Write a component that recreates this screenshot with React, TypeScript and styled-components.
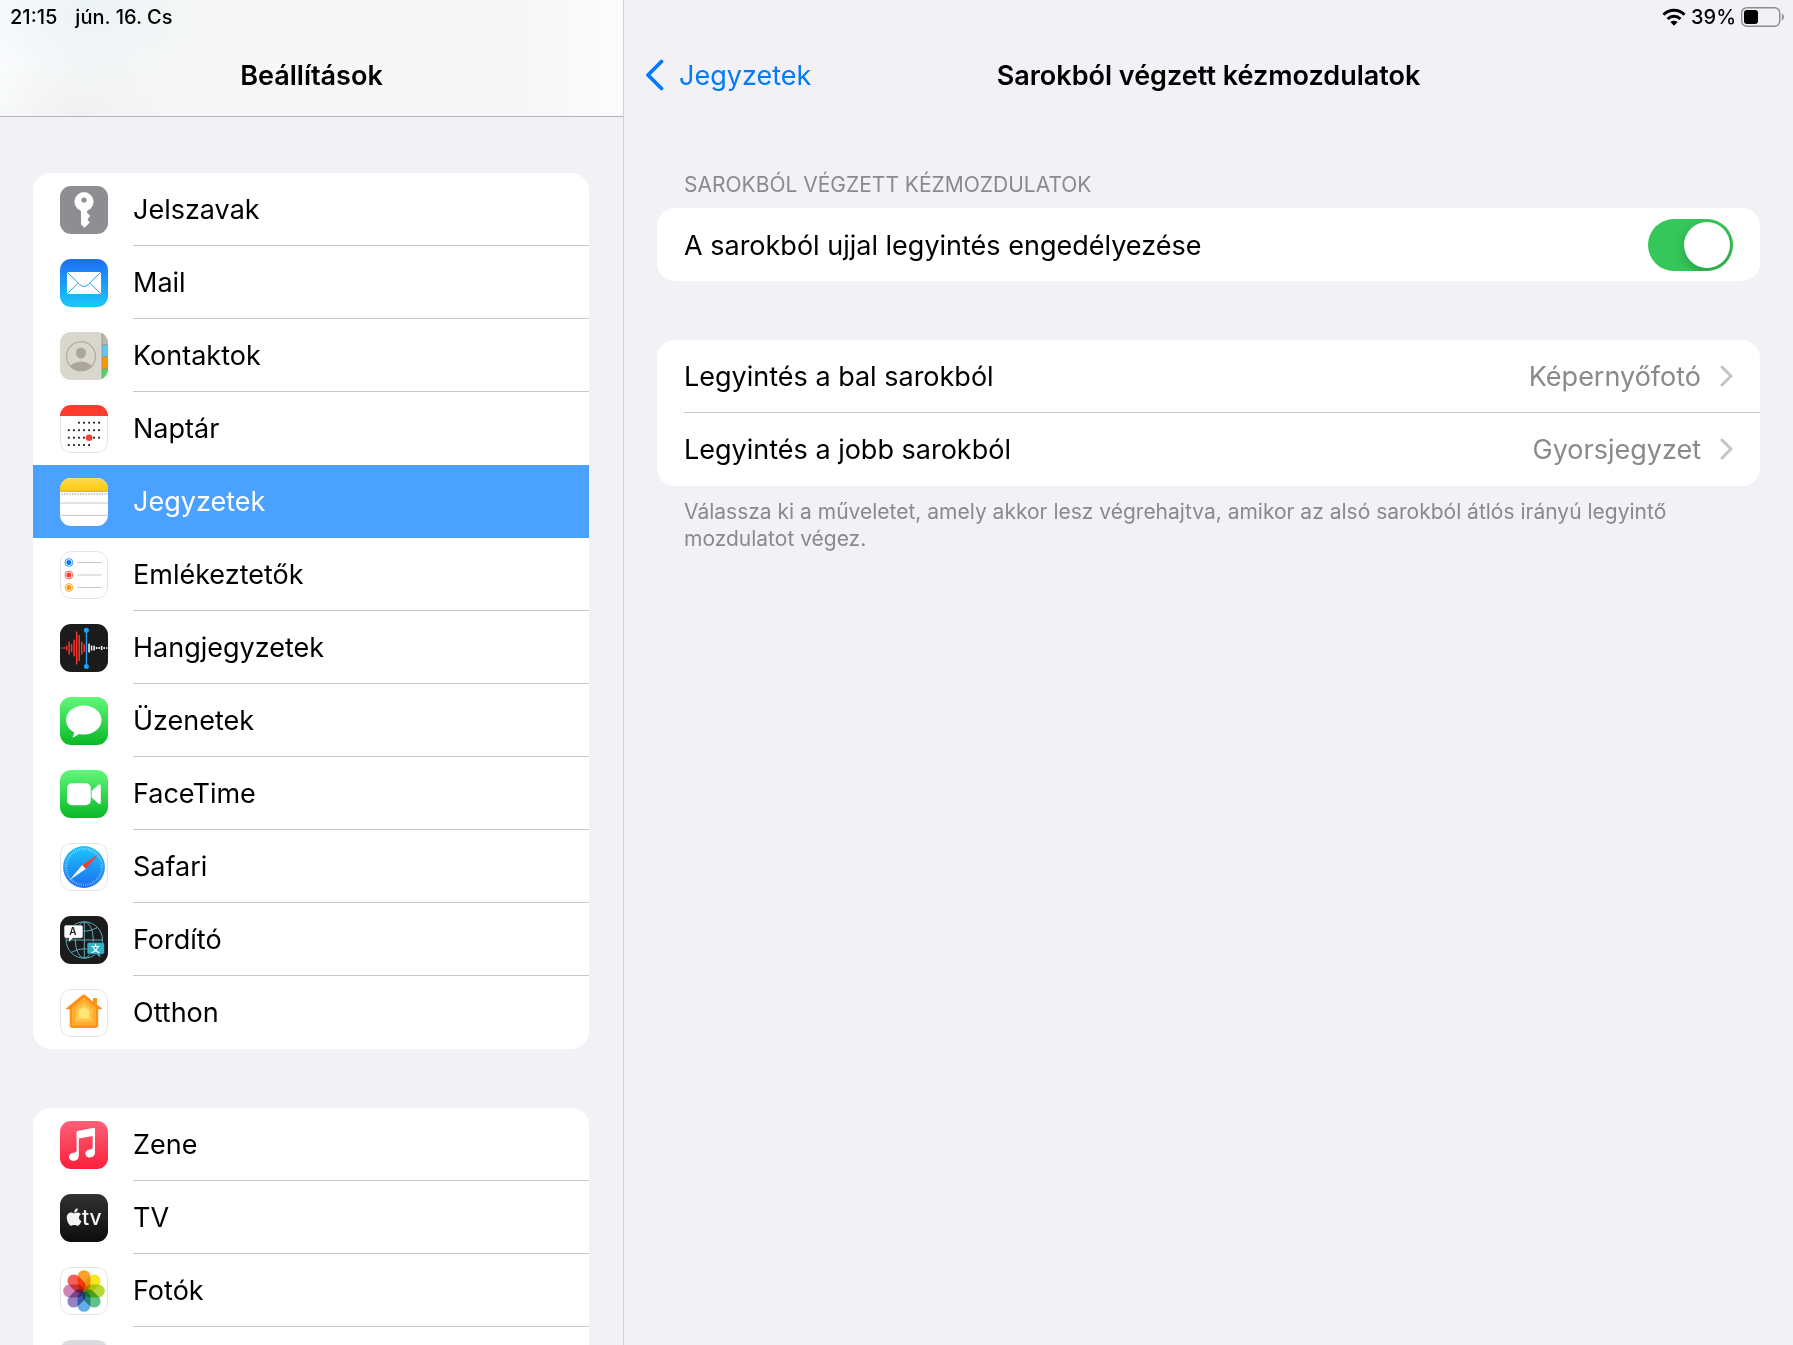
import React, { useState } from "react";
import styled, { createGlobalStyle, css } from "styled-components";

const GlobalStyle = createGlobalStyle`
  *, *::before, *::after { box-sizing: border-box; }
  body {
    margin: 0;
    background: #f2f1f6;
    color: #000;
    font-family: Inter, "Liberation Sans", sans-serif;
    font-size: 27px;
    line-height: 36px;
  }
`;

/* ---------- page frame ---------- */

const Page = styled.div`
  display: grid;
  grid-template-columns: 624px minmax(0, 1fr);
  height: 100vh;
`;

const Sidebar = styled.aside`
  display: flex;
  flex-direction: column;
  min-height: 0;
  border-right: 1px solid #cfcfd4;
`;

const Detail = styled.main`
  min-width: 0;
`;

const TopBar = styled.header<{ $raised?: boolean }>`
  flex: none;
  height: 117px;
  border-bottom: 1px solid transparent;
  ${(p) =>
    p.$raised &&
    css`
      border-color: #b3b3b7;
      background:
        radial-gradient(ellipse 130px 80px at 90px 16px, #edf3f5, transparent),
        radial-gradient(ellipse 110px 70px at 80px 116px, #f0f1f0, transparent),
        linear-gradient(90deg, #fbfcfe, #f7f7f7 25%, #f7f7f7 85%, #fcfcfc);
    `}
`;

const StatusBar = styled.div<{ $end?: boolean }>`
  display: flex;
  align-items: center;
  justify-content: ${(p) => (p.$end ? "flex-end" : "flex-start")};
  gap: ${(p) => (p.$end ? 5 : 18)}px;
  height: 33px;
  padding: 0 8px 0 10px;
  font-size: 20px;
  font-weight: 500;
  line-height: 24px;
`;

const TitleRow = styled.div`
  display: grid;
  grid-template-columns: 1fr auto 1fr;
  align-items: center;
  height: 84px;
  padding: 0 21px;
`;

const Title = styled.h1`
  grid-column: 2;
  margin: 0;
  padding-top: 2px;
  font-size: 27px;
  font-weight: 600;
  line-height: 36px;
`;

const BackLink = styled.a`
  display: flex;
  align-items: center;
  gap: 15px;
  justify-self: start;
  color: #007aff;
  text-decoration: none;
`;

const BackText = styled.span`
  padding-top: 2px;
`;

/* ---------- sidebar list ---------- */

const SidebarScroll = styled.nav`
  display: flex;
  flex-direction: column;
  gap: 59px;
  flex: 1;
  min-height: 0;
  padding: 56px 34px 0 33px;
  overflow: hidden auto;
  scrollbar-width: none;
`;

const Group = styled.ul`
  flex: none;
  margin: 0;
  padding: 0;
  list-style: none;
  border-radius: 18px;
  background: #fff;
  overflow: hidden;
`;

const AppRow = styled.a<{ $selected: boolean }>`
  display: flex;
  align-items: center;
  gap: 25px;
  height: 73px;
  padding-left: 27px;
  background: ${(p) => (p.$selected ? "#4aa1ff" : "#fff")};
  color: ${(p) => (p.$selected ? "#fff" : "#000")};
  text-decoration: none;
`;

const AppName = styled.span<{ $divider: boolean }>`
  display: flex;
  flex: 1;
  align-items: center;
  align-self: stretch;
  padding-top: 2px;
  border-bottom: 1px solid ${(p) => (p.$divider ? "#c8c8cb" : "transparent")};
`;

const AppIcon = styled.svg`
  flex: none;
  width: 48px;
  height: 48px;
  border-radius: 11px;
`;

/* ---------- detail pane ---------- */

const Content = styled.div`
  display: flex;
  flex-direction: column;
  padding: 54px 33px 0;
`;

const SectionHeading = styled.h2`
  margin: 0;
  padding: 0 27px 9px;
  color: #8a8a8e;
  font-size: 21px;
  font-weight: 400;
  line-height: 28px;
  text-transform: uppercase;
`;

const Card = styled.div`
  border-radius: 18px;
  background: #fff;
  overflow: hidden;

  & + & {
    margin-top: 59px;
  }
`;

const SettingRow = styled.div`
  display: flex;
  align-items: center;
  justify-content: space-between;
  height: 73px;
  padding: 0 27px;
`;

const SettingLabel = styled.label`
  padding-top: 2px;
`;

const LinkRow = styled.button`
  display: block;
  width: 100%;
  height: 73px;
  padding: 0 0 0 27px;
  border: 0;
  background: none;
  color: inherit;
  font: inherit;
  text-align: left;
`;

const LinkRowInner = styled.span<{ $divider?: boolean }>`
  display: flex;
  align-items: center;
  gap: 19px;
  height: 100%;
  padding-right: 27px;
  border-bottom: 1px solid ${(p) => (p.$divider ? "#c8c8cb" : "transparent")};
`;

const RowLabel = styled.span`
  flex: 1;
  padding-top: 2px;
`;

const RowValue = styled.span`
  padding-top: 2px;
  color: #8a8a8e;
`;

const Footnote = styled.p`
  margin: 0;
  padding: 12px 27px 0;
  color: #8a8a8e;
  font-size: 21px;
  line-height: 27px;
`;

const Switch = styled.input`
  appearance: none;
  flex: none;
  width: 85px;
  height: 52px;
  margin: 0;
  padding: 3px;
  border-radius: 26px;
  background: #e9e9ea;
  overflow: hidden;

  &::before {
    content: "";
    display: block;
    width: 46px;
    height: 46px;
    border-radius: 50%;
    background: #fff;
    box-shadow: 0 4px 12px rgba(0, 0, 0, 0.22);
  }

  &:checked {
    background: #35c759;
  }

  &:checked::before {
    margin-left: auto;
  }
`;

/* ---------- app icons, each on a 48 × 48 grid ---------- */

const Fade = ({ id, from, to }: { id: string; from: string; to: string }) => (
  <>
    <defs>
      <linearGradient id={id} x1="0" y1="0" x2="0" y2="1">
        <stop offset="0" stopColor={from} />
        <stop offset="1" stopColor={to} />
      </linearGradient>
    </defs>
    <rect width="48" height="48" fill={`url(#${id})`} />
  </>
);

const Plain = () => (
  <rect x="0.5" y="0.5" width="47" height="47" rx="10.5" fill="#fff" stroke="#e4e4e6" />
);

const KeyArt = () => (
  <>
    <rect width="48" height="48" fill="#8e8d92" />
    <circle cx="24" cy="15.7" r="9.6" fill="#fff" />
    <path d="M21 22V38.5L24.6 41.8L29.8 36.4L27.4 33.4L30.3 30L27 26.5V22Z" fill="#fff" />
    <circle cx="24" cy="14" r="2.6" fill="#8e8d92" />
  </>
);

const MailArt = () => (
  <>
    <Fade id="mail" from="#1d6ef2" to="#1ac9fc" />
    <rect x="7" y="13" width="34" height="22" rx="1.5" fill="#fff" />
    <path
      d="M7.5 13.5L20 25.6Q24 29.4 28 25.6L40.5 13.5M7.5 34.5L18 24.2M40.5 34.5L30 24.2"
      fill="none"
      stroke="#2b9df6"
      strokeWidth="1"
    />
  </>
);

const ContactsArt = () => (
  <>
    <rect width="48" height="48" fill="#d9d7cd" />
    <rect x="42" width="6" height="13" fill="#bcb8ae" />
    <rect x="42" y="13" width="6" height="12" fill="#5ac8fa" />
    <rect x="42" y="25" width="6" height="12" fill="#ff9500" />
    <rect x="42" y="37" width="6" height="11" fill="#4cd964" />
    <path d="M42 12.7H48M42 24.6H48M42 36.8H48M42 0V48" stroke="#8c8878" strokeWidth="0.7" />
    <clipPath id="person">
      <circle cx="21" cy="24.3" r="14.3" />
    </clipPath>
    <circle cx="21" cy="24.3" r="14.5" fill="none" stroke="#aba59d" strokeWidth="1.1" />
    <ellipse cx="21" cy="21" rx="5" ry="5.6" fill="#aba59d" />
    <ellipse cx="21" cy="38" rx="12" ry="8.6" fill="#aba59d" clipPath="url(#person)" />
  </>
);

const CalendarArt = () => {
  const cols = [8.8, 13.9, 19, 24, 29.1, 34.1, 39.1];
  const weeks = [
    { y: 17.7, days: cols.slice(2) },
    { y: 25.2, days: cols },
    { y: 32.7, days: cols },
    { y: 40, days: cols.slice(0, 5) },
  ];
  return (
    <>
      <Plain />
      <rect width="48" height="11" fill="#ff3b30" />
      {weeks.map((w) =>
        w.days.map((x) => (
          <rect key={`${x}-${w.y}`} x={x - 0.9} y={w.y - 0.9} width="1.8" height="1.8" fill="#111" />
        ))
      )}
      <circle cx="29.1" cy="32.7" r="3.3" fill="#ff3b30" />
    </>
  );
};

const NotesArt = () => (
  <>
    <defs>
      <linearGradient id="notes" x1="0" y1="0" x2="0" y2="1">
        <stop offset="0" stopColor="#fddc55" />
        <stop offset="1" stopColor="#fdc908" />
      </linearGradient>
    </defs>
    <rect width="48" height="48" fill="#fff" />
    <rect width="48" height="13" fill="url(#notes)" />
    <path d="M0 13.4H48" stroke="#bfa04e" strokeWidth="0.9" />
    <path d="M1.2 16H48" stroke="#b4b4b6" strokeWidth="1.3" strokeDasharray="1.4 1.3" />
    <path d="M0 25H48M0 37.4H48" stroke="#c6c6c8" strokeWidth="1" />
  </>
);

const RemindersArt = () => (
  <>
    <Plain />
    {[
      { y: 11.5, c: "#007aff" },
      { y: 24, c: "#ff3b30" },
      { y: 36.5, c: "#ff9500" },
    ].map((r) => (
      <g key={r.y}>
        <circle cx="8.9" cy={r.y} r="2.5" fill={r.c} />
        <circle cx="8.9" cy={r.y} r="3.9" fill="none" stroke={r.c} strokeWidth="0.8" />
        <path d={`M17.5 ${r.y}H42`} stroke="#c7c7cb" strokeWidth="1" />
      </g>
    ))}
  </>
);

const VoiceArt = () => {
  const red = [1.5, 2, 5, 13, 8, 17, 33, 26, 13, 8];
  const white = [9, 5, 5, 2, 2, 4, 2, 1.5];
  const step = 2.52;
  return (
    <>
      <rect width="48" height="48" fill="#1b1b1c" />
      {red.map((h, i) => (
        <rect key={i} x={0.8 + i * step} y={24 - h / 2} width="1.5" height={h} rx="0.5" fill="#f5382f" />
      ))}
      {white.map((h, i) => (
        <rect key={i} x={28.3 + i * step} y={24 - h / 2} width="1.5" height={h} rx="0.5" fill="#fff" />
      ))}
      <path d="M26.4 6V42.4" stroke="#1aa4f5" strokeWidth="1.3" />
      <circle cx="26.4" cy="6.2" r="2.5" fill="#1aa4f5" />
      <circle cx="26.4" cy="42.4" r="2.5" fill="#1aa4f5" />
    </>
  );
};

const MessagesArt = () => (
  <>
    <Fade id="messages" from="#60f879" to="#0ab827" />
    <path
      d="M23.8 8.6C33.7 8.6 41.5 15 41.5 23S33.7 37.6 23.8 37.6C21.9 37.6 20.2 37.4 18.6 37C16.8 38.9 14.6 40.1 12.2 40.5C13.2 39 14 37.3 14.1 35.4C9.2 32.8 6.1 28.2 6.1 23C6.1 15 13.9 8.6 23.8 8.6Z"
      fill="#fff"
    />
  </>
);

const FaceTimeArt = () => (
  <>
    <Fade id="facetime" from="#60f879" to="#0ab827" />
    <rect x="7" y="13.3" width="23.8" height="22" rx="5" fill="#fff" />
    <path
      d="M31.6 20.9L38.3 15C39.5 14 40.8 14.6 40.8 16V32.4C40.8 33.8 39.5 34.4 38.3 33.4L31.6 27.6Z"
      fill="#fff"
    />
  </>
);

const SafariArt = () => (
  <>
    <defs>
      <linearGradient id="safari" x1="0" y1="0" x2="0" y2="1">
        <stop offset="0" stopColor="#1bc7fb" />
        <stop offset="1" stopColor="#1d6df0" />
      </linearGradient>
    </defs>
    <Plain />
    <circle cx="24" cy="24" r="20.9" fill="url(#safari)" />
    <circle
      cx="24"
      cy="24"
      r="18"
      fill="none"
      stroke="#fff"
      strokeOpacity="0.55"
      strokeWidth="2.6"
      strokeDasharray="0.6 1.285"
    />
    <path d="M38.6 11L22.3 22L25.7 26Z" fill="#ff3b30" />
    <path d="M9.6 37L22.3 22L25.7 26Z" fill="#fff" />
  </>
);

const TranslateArt = () => (
  <>
    <rect width="48" height="48" fill="#1b1b1c" />
    <g fill="none" stroke="#5fa9b8" strokeWidth="1">
      <circle cx="24.3" cy="24" r="18.2" />
      <ellipse cx="24.3" cy="24" rx="9" ry="18.2" />
      <path d="M24.3 6V42.2M6 24H42.5M11 11.5Q24.3 19 37.6 11.5M11 36.5Q24.3 29 37.6 36.5" />
    </g>
    <path
      d="M6 9H21Q23 9 23 11V20.3Q23 22.3 21 22.3H13L8.7 26.6V22.3H6Q4 22.3 4 20.3V11Q4 9 6 9Z"
      fill="#fff"
      stroke="#1b1b1c"
      strokeWidth="0.6"
    />
    <path
      d="M29 26.3H42.5Q44.5 26.3 44.5 28.3V36.3Q44.5 38.3 42.5 38.3H40.3V42L36.3 38.3H29Q27 38.3 27 36.3V28.3Q27 26.3 29 26.3Z"
      fill="#30b0c7"
      stroke="#1b1b1c"
      strokeWidth="0.6"
    />
    <text x="12.8" y="19.2" textAnchor="middle" fontSize="10" fontWeight="600" fontFamily="Inter, sans-serif" fill="#222">
      A
    </text>
    <text x="35.5" y="35.7" textAnchor="middle" fontSize="9" fontWeight="700" fontFamily="'Noto Sans CJK SC', sans-serif" fill="#fff">
      文
    </text>
  </>
);

const HomeArt = () => (
  <>
    <Plain />
    <path
      d="M33 9.5Q33 9 33.5 9H36.5Q37 9 37 9.5V15.5L42 19.5Q42 20.3 41 20.3H38.2V36.5Q38.2 38.9 35.8 38.9H12Q9.7 38.9 9.7 36.5V20.3H6.6Q5.7 20.3 5.9 19.5L22.7 5.8Q23.9 5 25.1 5.8L33 12.4Z"
      fill="#ff9114"
    />
    <path d="M23.9 8.8L36 18.8V35.3Q36 36.6 34.7 36.6H13.2Q11.9 36.6 11.9 35.3V18.8Z" fill="#ffac30" />
    <path d="M23.9 12.8L32.8 20V33H15V20Z" fill="#ffc040" />
    <path d="M23.9 17L29.3 21.4V29.8H18.5V21.4Z" fill="#ffe577" stroke="#ffd25c" strokeWidth="1.2" />
  </>
);

const MusicArt = () => (
  <>
    <Fade id="music" from="#fc6078" to="#fa203a" />
    <path
      d="M16.6 11.2Q16.6 10.2 17.6 10L34 6.8Q35 6.6 35 7.6V31.5C35 34.5 32.7 36.4 29.7 36.4C27.2 36.4 25.4 34.9 25.4 32.7C25.4 30.3 27.1 29 29.7 28.5C31.8 28.1 32.7 27.7 32.7 26.2V14.9L18.8 17.6V34.7C18.8 37.8 16.6 39.9 13.3 39.9C10.7 39.9 8.9 38.3 8.9 36.1C8.9 33.7 10.7 32.3 13.3 31.8C15.5 31.4 16.6 31 16.6 29.3Z"
      fill="#fff"
    />
  </>
);

const TvArt = () => (
  <>
    <Fade id="tv" from="#323233" to="#0d0d0e" />
    <path
      transform="translate(6.6 13.1) scale(0.039)"
      d="M318.7 268.7c-.2-36.7 16.4-64.4 50-84.8-18.8-26.9-47.2-41.7-84.7-44.6-35.5-2.8-74.3 20.7-88.5 20.7-15 0-49.4-19.7-76.4-19.7C63.3 141.2 4 184.8 4 273.5q0 39.3 14.4 81.2c12.8 36.7 59 126.7 107.2 125.2 25.2-.6 43-17.9 75.8-17.9 31.8 0 48.3 17.9 76.4 17.9 48.6-.7 90.4-82.5 102.6-119.3-65.2-30.7-61.7-90-61.7-91.9zm-56.6-164.2c27.3-32.4 24.8-61.9 24-72.5-24.1 1.4-52 16.4-67.9 34.9-17.5 19.8-27.8 44.3-25.6 71.9 26.1 2 49.9-11.4 69.5-34.2z"
      fill="#f4f4f4"
    />
    <text x="22" y="31.4" fontSize="21" fontWeight="500" fontFamily="Inter, sans-serif" fill="#f4f4f4">
      tv
    </text>
  </>
);

const Petals = styled.g`
  isolation: isolate;
`;

const Petal = styled.rect`
  mix-blend-mode: multiply;
`;

const PhotosArt = () => {
  const petals = ["#fb9f2d", "#f6e71e", "#b7d83a", "#62c08a", "#62aee6", "#9382c4", "#cf83b6", "#f55f5a"];
  return (
    <>
      <Plain />
      <Petals>
        {petals.map((c, i) => (
          <Petal
            key={c}
            x="17.6"
            y="3.2"
            width="12.8"
            height="20.6"
            rx="6.4"
            fill={c}
            transform={`rotate(${i * 45} 24 24)`}
          />
        ))}
      </Petals>
    </>
  );
};

const CameraArt = () => <Fade id="camera" from="#dcdce0" to="#c9c9cd" />;

/* ---------- system glyphs ---------- */

const WifiGlyph = () => (
  <svg width="24" height="18" viewBox="0 0 24 18" aria-label="Wi-Fi">
    <g fill="none" stroke="#000" strokeWidth="3">
      <path d="M1.5 6.7C7.3 0.8 16.7 0.8 22.5 6.7" />
      <path d="M5.6 11C9.2 7.4 14.8 7.4 18.4 11" />
    </g>
    <path d="M12 17.8L8.4 14.1C10.4 12.2 13.6 12.2 15.6 14.1Z" fill="#000" />
  </svg>
);

const BatteryGlyph = () => (
  <svg width="44" height="20" viewBox="0 0 44 20" aria-label="39%">
    <rect x="0.7" y="0.7" width="38" height="18.6" rx="5" fill="none" stroke="#8d8d90" strokeWidth="1.4" />
    <rect x="3" y="3" width="14" height="14" rx="3" fill="#000" />
    <path d="M40.8 6.5C43.8 7.8 43.8 12.2 40.8 13.5Z" fill="#9a9a9d" />
  </svg>
);

const BackGlyph = () => (
  <svg width="19" height="32" viewBox="0 0 19 32" aria-hidden="true">
    <path
      d="M16.5 2.5L3 16L16.5 29.5"
      fill="none"
      stroke="#007aff"
      strokeWidth="3.8"
      strokeLinecap="round"
      strokeLinejoin="round"
    />
  </svg>
);

const Disclosure = () => (
  <svg width="13" height="22" viewBox="0 0 13 22" aria-hidden="true">
    <path
      d="M2 2L11 11L2 20"
      fill="none"
      stroke="#c4c4c7"
      strokeWidth="3"
      strokeLinecap="round"
      strokeLinejoin="round"
    />
  </svg>
);

/* ---------- data ---------- */

type AppEntry = { id: string; name: string; Art: () => React.ReactElement };

const groups: AppEntry[][] = [
  [
    { id: "passwords", name: "Jelszavak", Art: KeyArt },
    { id: "mail", name: "Mail", Art: MailArt },
    { id: "contacts", name: "Kontaktok", Art: ContactsArt },
    { id: "calendar", name: "Naptár", Art: CalendarArt },
    { id: "notes", name: "Jegyzetek", Art: NotesArt },
    { id: "reminders", name: "Emlékeztetők", Art: RemindersArt },
    { id: "voice", name: "Hangjegyzetek", Art: VoiceArt },
    { id: "messages", name: "Üzenetek", Art: MessagesArt },
    { id: "facetime", name: "FaceTime", Art: FaceTimeArt },
    { id: "safari", name: "Safari", Art: SafariArt },
    { id: "translate", name: "Fordító", Art: TranslateArt },
    { id: "home", name: "Otthon", Art: HomeArt },
  ],
  [
    { id: "music", name: "Zene", Art: MusicArt },
    { id: "tv", name: "TV", Art: TvArt },
    { id: "photos", name: "Fotók", Art: PhotosArt },
    { id: "camera", name: "", Art: CameraArt },
  ],
];

const corners = [
  { label: "Legyintés a bal sarokból", value: "Képernyőfotó" },
  { label: "Legyintés a jobb sarokból", value: "Gyorsjegyzet" },
];

export default function App() {
  const [selected, setSelected] = useState("notes");
  const [enabled, setEnabled] = useState(true);

  return (
    <>
      <GlobalStyle />
      <Page>
        <Sidebar>
          <TopBar $raised>
            <StatusBar>
              <span>21:15</span>
              <span>jún. 16. Cs</span>
            </StatusBar>
            <TitleRow>
              <Title>Beállítások</Title>
            </TitleRow>
          </TopBar>
          <SidebarScroll>
            {groups.map((apps, g) => (
              <Group key={g}>
                {apps.map(({ id, name, Art }, i) => {
                  const next = apps[i + 1];
                  const divider = !!next && id !== selected && next.id !== selected;
                  return (
                    <li key={id}>
                      <AppRow href={`#${id}`} $selected={id === selected} onClick={() => setSelected(id)}>
                        <AppIcon viewBox="0 0 48 48" aria-hidden="true">
                          <Art />
                        </AppIcon>
                        <AppName $divider={divider}>{name}</AppName>
                      </AppRow>
                    </li>
                  );
                })}
              </Group>
            ))}
          </SidebarScroll>
        </Sidebar>

        <Detail>
          <TopBar>
            <StatusBar $end>
              <WifiGlyph />
              <span>39%</span>
              <BatteryGlyph />
            </StatusBar>
            <TitleRow>
              <BackLink href="#notes">
                <BackGlyph />
                <BackText>Jegyzetek</BackText>
              </BackLink>
              <Title as="h2">Sarokból végzett kézmozdulatok</Title>
            </TitleRow>
          </TopBar>
          <Content>
            <SectionHeading>Sarokból végzett kézmozdulatok</SectionHeading>
            <Card>
              <SettingRow>
                <SettingLabel htmlFor="corner-swipe">A sarokból ujjal legyintés engedélyezése</SettingLabel>
                <Switch
                  id="corner-swipe"
                  type="checkbox"
                  role="switch"
                  checked={enabled}
                  onChange={(e) => setEnabled(e.target.checked)}
                />
              </SettingRow>
            </Card>
            <Card>
              {corners.map((c, i) => (
                <LinkRow key={c.label} type="button">
                  <LinkRowInner $divider={i < corners.length - 1}>
                    <RowLabel>{c.label}</RowLabel>
                    <RowValue>{c.value}</RowValue>
                    <Disclosure />
                  </LinkRowInner>
                </LinkRow>
              ))}
            </Card>
            <Footnote>
              Válassza ki a műveletet, amely akkor lesz végrehajtva, amikor az alsó sarokból átlós
              irányú legyintő mozdulatot végez.
            </Footnote>
          </Content>
        </Detail>
      </Page>
    </>
  );
}
